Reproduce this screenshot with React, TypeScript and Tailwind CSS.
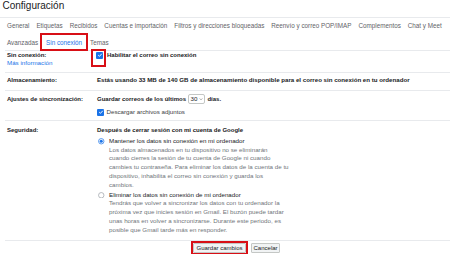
import React from 'react'

const Check = ({ className = '', children }: { className?: string; children?: React.ReactNode }) => (
  <span className={`relative inline-flex items-center justify-center w-[7px] h-[7px] shrink-0 rounded-[1px] bg-[#1a73e8] ${className}`}>
    <svg viewBox="0 0 10 10" className="w-[6px] h-[6px]">
      <path d="M2 5.2 4.1 7.2 8 2.9" fill="none" stroke="white" strokeWidth="1.6" />
    </svg>
    {children}
  </span>
)

const Radio = ({ on }: { on?: boolean }) => (
  <svg viewBox="0 0 12 12" className="w-[6.5px] h-[6.5px] shrink-0">
    <circle cx="6" cy="6" r="5" fill="none" stroke={on ? '#1a73e8' : '#9aa0a6'} strokeWidth="1.3" />
    {on && <circle cx="6" cy="6" r="2.8" fill="#1a73e8" />}
  </svg>
)

const tabs = [
  'General',
  'Etiquetas',
  'Recibidos',
  'Cuentas e importación',
  'Filtros y direcciones bloqueadas',
  'Reenvío y correo POP/IMAP',
  'Complementos',
  'Chat y Meet',
]

export default function App() {
  return (
    <div className="w-[450px] h-[254px] overflow-hidden bg-white text-[#202124] font-['Liberation_Sans',Arial,sans-serif]">
      {/* Header */}
      <div className="h-[18px] border-b border-[#e8eaed] pl-[2.5px] text-[10px] leading-[12px]">Configuración</div>

      {/* Tabs */}
      <div className="ml-[5px] pl-[2px] pt-[3.7px] pb-[3.3px] border-b border-[#e8eaed] text-[6.3px] leading-[8px] text-[#5f6368]">
        <div className="flex gap-[7px] whitespace-nowrap">
          {tabs.map((t) => (
            <span key={t}>{t}</span>
          ))}
        </div>
        <div className="flex gap-[8px] mt-[9px]">
          <span>Avanzadas</span>
          <span className="relative text-[#1a73e8]">
            Sin conexión
            <span className="absolute -left-[6px] -right-[6px] -top-[5.7px] -bottom-[4.3px] border-2 border-[#d80f16]" />
          </span>
          <span>Temas</span>
        </div>
      </div>

      <div className="ml-[5px]">
        {/* Sin conexión */}
        <div className="flex h-[22px] border-b border-[#e8eaed] text-[6px] leading-[8.5px]">
          <div className="w-[92px] pl-[2px]">
            <div className="font-bold">Sin conexión:</div>
            <div className="text-[#1a73e8] text-[6.2px]">Más información</div>
          </div>
          <div className="flex items-center h-[8.5px] gap-[4px] -ml-[1px]">
            <Check>
              <span className="absolute -left-[5px] -right-[3px] -top-[3px] -bottom-[8px] border-2 border-[#d80f16]" />
            </Check>
            <span className="font-bold">Habilitar el correo sin conexión</span>
          </div>
        </div>

        {/* Almacenamiento */}
        <div className="flex h-[18px] pt-[2.75px] border-b border-[#e8eaed] text-[6px] leading-[8.5px] font-bold">
          <div className="w-[92px] pl-[2px]">Almacenamiento:</div>
          <div className="whitespace-nowrap text-[6.15px]">
            Estás usando 33 MB de 140 GB de almacenamiento disponible para el correo sin conexión en tu ordenador
          </div>
        </div>

        {/* Ajustes */}
        <div className="flex h-[30px] pt-[3.75px] border-b border-[#e8eaed] text-[6px] leading-[8.5px]">
          <div className="w-[92px] pl-[2px] font-bold">Ajustes de sincronización:</div>
          <div>
            <div className="flex items-center h-[8.5px] font-bold whitespace-nowrap">
              Guardar correos de los últimos
              <span className="mx-[2px] flex items-center gap-[1.5px] h-[9.5px] px-[1.5px] border border-[#c4c7c5] rounded-[2px] font-normal text-[6.2px]">
                30
                <svg viewBox="0 0 8 8" className="w-[4px] h-[4px]">
                  <path d="M1.5 3 4 5.5 6.5 3" fill="none" stroke="#444" strokeWidth="1" />
                </svg>
              </span>
              días.
            </div>
            <div className="flex items-center mt-[5px] h-[8.5px] gap-[2.5px] text-[6.2px]">
              <Check className="w-[6px] h-[6px]" />
              <span className="text-[#3c4043]">Descargar archivos adjuntos</span>
            </div>
          </div>
        </div>

        {/* Seguridad */}
        <div className="flex h-[120px] pt-[4.65px] border-b border-[#e8eaed] text-[6px] leading-[8.7px]">
          <div className="w-[92px] pl-[2px] font-bold">Seguridad:</div>
          <div>
            <div className="font-bold">Después de cerrar sesión con mi cuenta de Google</div>
            <div className="flex mt-[2.7px] text-[6.2px] whitespace-nowrap">
              <div className="w-[12px] pl-[1px] pt-[1.1px]">
                <Radio on />
              </div>
              <div>
                <div>Mantener los datos sin conexión en mi ordenador</div>
                <div className="text-[#70757a]">
                  <div>Los datos almacenados en tu dispositivo no se eliminarán</div>
                  <div>cuando cierres la sesión de tu cuenta de Google ni cuando</div>
                  <div>cambies tu contraseña. Para eliminar los datos de la cuenta de tu</div>
                  <div>dispositivo, inhabilita el correo sin conexión y guarda los</div>
                  <div>cambios.</div>
                </div>
              </div>
            </div>
            <div className="flex mt-[1.5px] text-[6.2px] whitespace-nowrap">
              <div className="w-[12px] pl-[1px] pt-[1.1px]">
                <Radio />
              </div>
              <div>
                <div>Eliminar los datos sin conexión de mi ordenador</div>
                <div className="text-[#70757a]">
                  <div>Tendrás que volver a sincronizar los datos con tu ordenador la</div>
                  <div>próxima vez que inicies sesión en Gmail. El buzón puede tardar</div>
                  <div>unas horas en volver a sincronizarse. Durante este periodo, es</div>
                  <div>posible que Gmail tarde más en responder.</div>
                </div>
              </div>
            </div>
          </div>
        </div>
      </div>

      {/* Buttons */}
      <div className="flex gap-[5px] pl-[193px] pt-[2px] text-[6px]">
        <button className="relative h-[10px] px-[2.5px] border border-[#c4c7c5] rounded-[1px] bg-[#f1f3f4] leading-[8px]">
          Guardar cambios
          <span className="absolute -left-[3px] -right-[3px] -top-[3px] -bottom-[3px] border-2 border-[#d80f16]" />
        </button>
        <button className="h-[10px] px-[1.5px] border border-[#c4c7c5] rounded-[1px] bg-[#f1f3f4] leading-[8px]">
          Cancelar
        </button>
      </div>
    </div>
  )
}
